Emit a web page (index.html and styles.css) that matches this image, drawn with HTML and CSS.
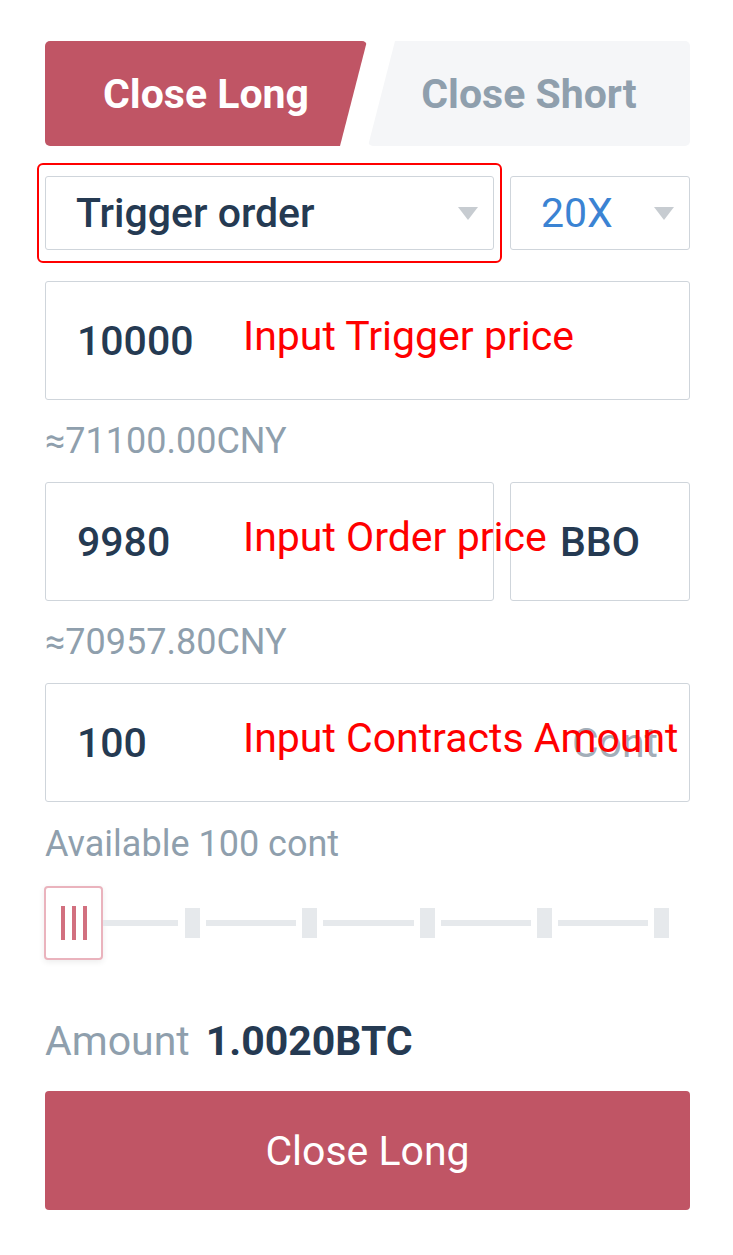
FILE: index.html
```html
<!DOCTYPE html>
<html lang="en">
<head>
<meta charset="utf-8">
<title>Close Long</title>
<link rel="stylesheet" href="styles.css">
</head>
<body>
<div class="panel">
  <div class="tabs">
    <div class="tab tab-active">Close Long</div>
    <div class="tab tab-idle">Close Short</div>
  </div>

  <div class="row select-row">
    <div class="field select select-type">
      <span class="val">Trigger order</span>
      <span class="caret"></span>
      <div class="highlight"></div>
    </div>
    <div class="field select select-lev">
      <span class="val lev">20X</span>
      <span class="caret"></span>
    </div>
  </div>

  <div class="field input-lg trigger">
    <span class="val">10000</span>
    <span class="note">Input Trigger price</span>
  </div>
  <div class="hint">≈71100.00CNY</div>

  <div class="row">
    <div class="field input-lg grow">
      <span class="val">9980</span>
      <span class="note">Input Order price</span>
    </div>
    <div class="field input-lg bbo"><span class="val">BBO</span></div>
  </div>
  <div class="hint">≈70957.80CNY</div>

  <div class="field input-lg">
    <span class="val">100</span>
    <span class="unit">Cont</span>
    <span class="note">Input Contracts Amount</span>
  </div>

  <div class="avail">Available 100 cont</div>

  <div class="slider">
    <div class="thumb"><i></i><i></i><i></i></div>
    <div class="seg seg-first"></div><div class="tick"></div>
    <div class="seg"></div><div class="tick"></div>
    <div class="seg"></div><div class="tick"></div>
    <div class="seg"></div><div class="tick"></div>
    <div class="seg"></div><div class="tick"></div>
  </div>

  <div class="amount"><span class="amount-label">Amount</span><span class="amount-val">1.0020BTC</span></div>

  <div class="submit">Close Long</div>
</div>
</body>
</html>
```
FILE: styles.css
```css
* { box-sizing: border-box; }
html, body { margin: 0; padding: 0; background: #ffffff; }
body {
  font-family: Roboto, "Noto Sans", "Liberation Sans", sans-serif;
  color: #253a52;
}
.panel {
  width: 733px;
  padding: 41px 43px 40px 45px;
}
.tabs {
  display: flex;
  gap: 1px;
  height: 105px;
}
.tab {
  flex: 1;
  display: flex;
  align-items: center;
  justify-content: center;
  font-size: 41px;
  font-weight: 700;
  border-radius: 5px;
}
.tab-active {
  background: #c05565;
  color: #ffffff;
  clip-path: polygon(0 0, 100% 0, calc(100% - 27px) 100%, 0 100%);
}
.tab-idle {
  background: #f5f6f8;
  color: #8f9fad;
  clip-path: polygon(27px 0, 100% 0, 100% 100%, 0 100%);
}
.row {
  display: flex;
  gap: 16px;
}
.select-row { margin-top: 30px; }
.trigger { margin-top: 31px; }
.field {
  position: relative;
  border: 1px solid #cfd5db;
  border-radius: 3px;
  display: flex;
  align-items: center;
  background: #fff;
}
.select {
  height: 74px;
  padding: 0 15px 0 30px;
  font-size: 41px;
  font-weight: 500;
}
.select-type { flex: 1; }
.select-lev { width: 180px; padding-left: 30px; }
.select .val { flex: 1; }
.lev { color: #3b83d3; font-weight: 400; }
.caret {
  width: 0;
  height: 0;
  border-left: 10px solid transparent;
  border-right: 10px solid transparent;
  border-top: 13px solid #c7ccd1;
}
.highlight {
  position: absolute;
  left: -9px;
  top: -14px;
  right: -9px;
  bottom: -14px;
  border: 2px solid #ff0000;
  border-radius: 6px;
  pointer-events: none;
}
.input-lg {
  height: 119px;
  padding: 0 31px;
  font-size: 41px;
  font-weight: 500;
}
.grow { flex: 1; }
.bbo { width: 180px; justify-content: center; padding: 0; }
.note {
  position: absolute;
  z-index: 2;
  left: 197px;
  top: 34px;
  line-height: 1;
  color: #ff0000;
  font-size: 41px;
  font-weight: 400;
  white-space: nowrap;
}
.unit {
  margin-left: auto;
  color: #a3aeb9;
  font-weight: 400;
}
.hint {
  height: 82px;
  line-height: 82px;
  font-size: 36px;
  color: #8f9fad;
}
.avail {
  margin-top: 22px;
  height: 40px;
  line-height: 40px;
  font-size: 36px;
  color: #8f9fad;
}
.slider {
  margin-top: 22px;
  height: 74px;
  display: flex;
  align-items: center;
  padding-right: 21px;
}
.thumb {
  width: 59px;
  height: 74px;
  margin-left: -1px;
  border: 2px solid #eab3bd;
  border-radius: 4px;
  background: #fff;
  box-shadow: 0 2px 6px rgba(0, 0, 0, 0.08);
  display: flex;
  align-items: center;
  justify-content: center;
  gap: 7px;
}
.thumb i {
  display: block;
  width: 4px;
  height: 34px;
  background: #d2707f;
}
.seg {
  flex: 1;
  height: 6px;
  background: #e6e9ec;
  margin: 0 6px;
}
.seg-first {
  flex: none;
  width: 75px;
  margin: 0 7px 0 0;
}
.tick {
  width: 15px;
  height: 30px;
  background: #e6e9ec;
}
.amount {
  margin-top: 56px;
  height: 50px;
  line-height: 50px;
  display: flex;
  gap: 16px;
  font-size: 41px;
}
.amount-label { color: #8f9fad; }
.amount-val { font-weight: 700; color: #253a52; }
.submit {
  margin-top: 25px;
  height: 119px;
  border-radius: 4px;
  background: #c05565;
  color: #ffffff;
  font-size: 41px;
  display: flex;
  align-items: center;
  justify-content: center;
}
```
